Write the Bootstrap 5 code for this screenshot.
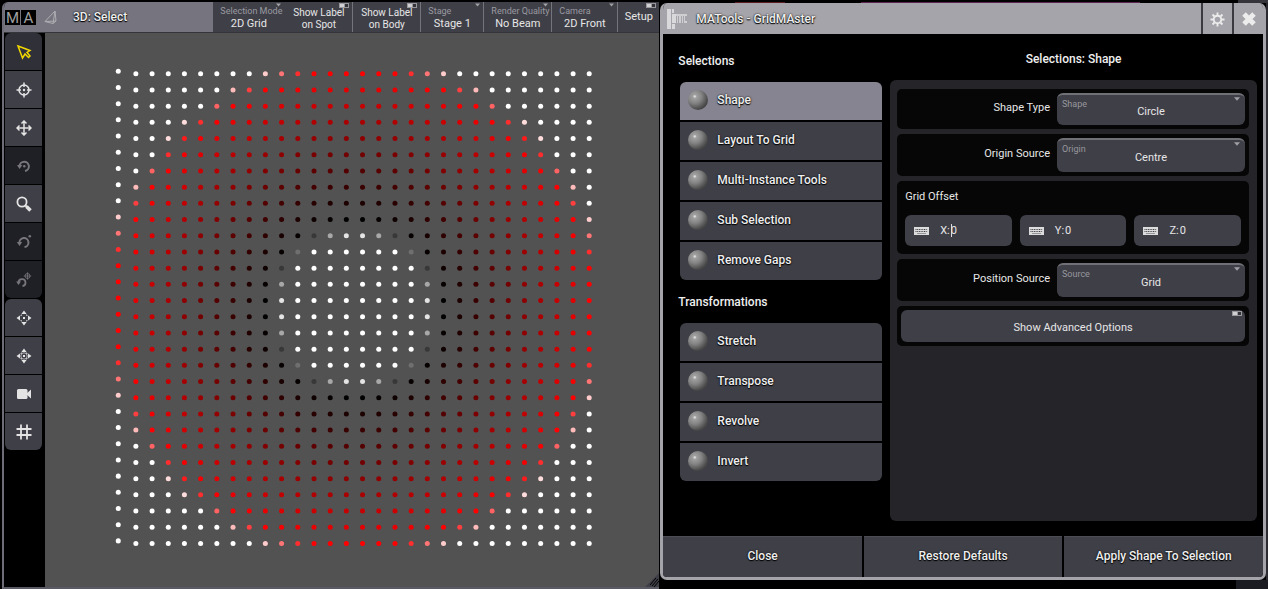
<!DOCTYPE html>
<html lang="en">
<head>
<meta charset="utf-8">
<meta name="viewport" content="width=device-width, initial-scale=1">
<title>MATools - GridMAster</title>
<link href="https://cdn.jsdelivr.net/npm/bootstrap@5.3.0/dist/css/bootstrap.min.css" rel="stylesheet">
<style>
  body { background: #000; color: #e6e6e6; font-family: Roboto, "Liberation Sans", sans-serif; font-size: 12px; line-height: 18px; }
  button, select, input { font: inherit; color: inherit; border: 0; border-radius: 0; padding: 0; }
  .desk { background: linear-gradient(#1b1b22, #1b1b22) right bottom / 32px 9px no-repeat, linear-gradient(#34343a, #34343a) right top / 30px 3px no-repeat, linear-gradient(90deg, #0000 735px, #5a1c20 735px 785px, #0000 785px 861px, #5c2450 861px 1140px, #0000 1140px) 0 2px / 100% 1px no-repeat, linear-gradient(#2a2a30, #2a2a30) right top / 2px 100% no-repeat #000; }
  .outlined { font-weight: 500; color: #efefef; text-shadow: 0 0 2px #000, 0 1px 1px #000; }

  /* 3D window */
  .view-win { flex: 0 0 52%; min-width: 0; margin-top: 2px; padding-left: 2px; }
  .view-frame { border-left: 2px solid #6d6c77; border-bottom: 2px solid #5a5a64; border-top-left-radius: 6px; overflow: hidden; }
  .view-bar { height: 31px; background: #75747f; border-bottom: 1px solid #34343b; }
  .ma-box { width: 15px; height: 15px; margin-left: 1px; background: #000; color: #a0a0a0; font-size: 15px; line-height: 16px; text-align: center; }
  .bar-btn { position: relative; background: #3f3f48; border-right: 1px solid #74747d; font-size: 10px; line-height: 10px; padding-top: 3px; flex: 0 1 68px; min-width: 0; white-space: nowrap; }
  .bar-btn.b-sel { flex-basis: 72px; border-right-color: #3f3f48; }
  .bar-btn.b-stage { flex-basis: 63px; }
  .bar-btn.b-cam { flex-basis: 66px; }
  .bar-btn.b-setup { flex-basis: 41px; border-right: 0; font-size: 11px; padding: 0; }
  .bar-btn small { display: block; font-size: 9px; line-height: 11px; color: #9a9aa0; text-align: left; padding-left: 7px; }
  .bar-btn .val { display: block; font-size: 11px; line-height: 14px; }
  .bar-btn .rows { display: block; line-height: 12px; }
  .corner { position: absolute; top: 1px; right: 3px; width: 10px; height: 5px; }
  .corner.tri { width: 5px; height: 4px; }
  .toolbar { background: #000; width: 41px; padding-left: 1px; gap: 1px; }
  .tool-group { width: 37px; gap: 1px; border-radius: 6px; overflow: hidden; }
  .tool { height: 37px; background: #3f3f48; color: #e4e4e4; display: flex; align-items: center; justify-content: center; }
  .tool.on { background: #303038; color: #f2d600; }
  .tool.off { background: #1f1f26; color: #77777b; }
  .tool svg { width: 16px; height: 16px; }
  .stage { background: #525252; }
  .grip { position: absolute; right: 0; bottom: 0; width: 14px; height: 14px; }

  /* dialog */
  .dlg { margin: 3px 2px 9px 1px; border: 3px solid #a4a4aa; border-top: 0; border-radius: 7px; overflow: hidden; background: #000; }
  .dlg-bar { height: 31px; background: #a4a4aa; }
  .dlg-btn { width: 31px; background: #a4a4aa; border-left: 2px solid #3a3a40; }
  .dlg-body { padding: 0 6px 15px 17px; gap: 8px; }
  .side { flex: 0 0 203px; flex-basis: 35%; padding-top: 18px; }
  .side h2, .main-col h2 { font-size: 12px; line-height: 18px; margin: 0 0 12px -2px; font-weight: 500; color: #efefef; }
  .side nav + h2 { margin-top: 13px; }
  .main-col { padding-top: 16px; }
  .main-col h2 { margin: 0 0 12px; }
  .menu { gap: 2px; border-radius: 6px; overflow: hidden; }
  .menu button { height: 38px; background: #3f3f48; text-align: left; padding: 0 0 2px 8px; gap: 9px; }
  .menu button.active { background: #858490; }
  .ball { width: 20px; height: 20px; border-radius: 50%; background: radial-gradient(circle at 34% 32%, #eee 0, #a0a0a0 10%, #858585 35%, #4c4c4c 68%, #262626 100%); }
  .panel { background: #242429; border-radius: 6px; padding: 9px 8px 8px 7px; gap: 5px; font-size: 11px; line-height: 16px; }
  .opt { background: #060606; border-radius: 5px; padding: 4px; }
  .opt.offsets { padding: 8px; }
  .opt.offsets .title { margin-bottom: 10px; }
  .opt label.name { padding-right: 7px; padding-bottom: 2px; }
  .pick { position: relative; flex: 0 0 188px; }
  .pick select { display: block; width: 100%; height: 34px; border-radius: 6px; background: #3f3f48; border-top: 2px solid #707077; appearance: none; text-align: center; text-align-last: center; padding-top: 4px; }
  .opt:first-child select { height: 32px; }
  .pick .hint { position: absolute; left: 5px; top: 5px; font-size: 9px; line-height: 12px; color: #97979c; }
  .pick svg { position: absolute; right: 5px; top: 4px; width: 6px; height: 4px; }
  .num { flex: 1 1 0; min-width: 0; height: 31px; background: #3f3f48; border-radius: 6px; padding-left: 9px; }
  .num label { padding-left: 11px; }
  .num input { width: 30px; background: none; outline: 0; padding-left: 1px; }
  .num input.caret { background: linear-gradient(#ddd, #ddd) 1px 50% / 1px 13px no-repeat; }
  .adv { position: relative; height: 32px; background: #3f3f48; border-radius: 6px; padding-top: 3px; }
  .foot { gap: 2px; }
  .foot button { flex: 1 1 0; height: 41px; background: #3f3f48; border-top: 1px solid #4c4c55; padding-bottom: 2px; }
</style>
</head>
<body>
<svg class="d-none">
  <symbol id="tri" viewBox="0 0 7 4"><path d="M0 0h7L3.500 4z" fill="#a0a0a5"/></symbol>
  <symbol id="tog" viewBox="0 0 10 5"><rect width="10" height="5" fill="#98989d"/><rect x="1" y="1" width="4" height="3" fill="#d0d0d3"/><rect x="6" y="1" width="3" height="3" fill="#33333a"/></symbol>
  <symbol id="kbd" viewBox="0 0 15 8"><rect width="15" height="8" fill="#dcdcdc"/><path d="M1.500 2.500h12M1.500 4.500h12" stroke="#3f3f48" stroke-dasharray="1 .7"/><path d="M3 6.500h9" stroke="#77777d" stroke-width=".7"/></symbol>
  <symbol id="move4" viewBox="0 0 16 16"><path fill="currentColor" d="M8 .5 10.600 4H5.400zM8 15.500 10.600 12H5.400zM.5 8 4 5.400v5.200zM15.500 8 12 5.400v5.200zM7 7h2v2H7z"/><path d="M5 6V5h1M10 5h1v1M11 10v1h-1M6 11H5v-1" fill="none" stroke="currentColor" stroke-width=".8"/></symbol>
</svg>

<div class="desk d-flex min-vh-100">
  <section class="view-win d-flex">
    <div class="view-frame d-flex flex-column flex-fill position-relative">
      <header class="view-bar d-flex">
        <div class="d-flex align-items-center flex-fill">
          <span class="ma-box">M</span><span class="ma-box">A</span>
          <svg class="ms-2" width="13" height="15" viewBox="0 0 13 15" fill="none" stroke="#aeaeb3"><path d="M11 1 1 11.500 9 13.500zM11 1 12 11 9 13.500M1 11.500 12 11"/></svg>
          <span class="outlined ms-3">3D: Select</span>
        </div>
        <button class="bar-btn b-sel"><small>Selection Mode</small><span class="val">2D Grid</span><svg class="corner tri"><use href="#tri"/></svg></button>
        <button class="bar-btn"><span class="rows">Show Label<br>on Spot</span><svg class="corner"><use href="#tog"/></svg></button>
        <button class="bar-btn"><span class="rows">Show Label<br>on Body</span><svg class="corner"><use href="#tog"/></svg></button>
        <button class="bar-btn b-stage"><small>Stage</small><span class="val">Stage 1</span><svg class="corner tri"><use href="#tri"/></svg></button>
        <button class="bar-btn"><small>Render Quality</small><span class="val">No Beam</span><svg class="corner tri"><use href="#tri"/></svg></button>
        <button class="bar-btn b-cam"><small>Camera</small><span class="val">2D Front</span><svg class="corner tri"><use href="#tri"/></svg></button>
        <button class="bar-btn b-setup">Setup<svg class="corner"><use href="#tog"/></svg></button>
      </header>
      <div class="d-flex flex-fill">
        <div class="toolbar d-flex flex-column">
          <div class="tool-group d-flex flex-column">
            <button class="tool on" aria-label="Select"><svg viewBox="0 0 16 16" fill="none" stroke="currentColor" stroke-width="1.500"><path d="M2 2 14 6.500 11 8.500 14 12 12.500 13.500 9 10 6.500 14z"/></svg></button>
            <button class="tool" aria-label="Target"><svg viewBox="0 0 16 16" fill="none" stroke="currentColor" stroke-width="1.500"><circle cx="8" cy="8" r="5"/><path d="M8 .5V5M8 11v4.500M.5 8H5M11 8h4.500"/><circle cx="8" cy="8" r="1.200" fill="currentColor" stroke="none"/></svg></button>
            <button class="tool" aria-label="Move"><svg viewBox="0 0 16 16" fill="none" stroke="currentColor" stroke-width="1.500"><path d="M8 1v14M1 8h14M5.500 3.500 8 1l2.500 2.500M5.500 12.500 8 15l2.500-2.500M3.500 5.500 1 8l2.500 2.500M12.500 5.500 15 8l-2.500 2.500"/></svg></button>
            <button class="tool off" aria-label="Rotate"><svg viewBox="0 0 16 16" fill="none" stroke="currentColor" stroke-width="2"><path d="M3.500 8A4.700 4.700 0 1 1 9 13"/><path d="M1 7h5.400L3.500 11z" fill="currentColor" stroke="none"/><circle cx="8.300" cy="8.300" r="1.200" fill="currentColor" stroke="none"/></svg></button>
            <button class="tool" aria-label="Zoom"><svg viewBox="0 0 16 16" fill="none" stroke="currentColor"><circle cx="6" cy="6" r="4.600" stroke-width="1.800"/><path d="m9 9 2 2" stroke-width="2"/><path d="m10.500 10.500 4 4" stroke-width="3.600"/></svg></button>
            <button class="tool off" aria-label="Orbit"><svg viewBox="0 0 16 16" fill="none" stroke="currentColor" stroke-width="2"><path d="M3.500 9A4.500 4.500 0 1 1 8.500 13"/><path d="M.8 8h5.400L3.500 12z" fill="currentColor" stroke="none"/><circle cx="13.800" cy="2.300" r="1.300" fill="currentColor" stroke="none"/></svg></button>
            <button class="tool off" aria-label="Orbit target"><svg viewBox="0 0 16 16" fill="none" stroke="currentColor"><path d="M2.500 10.500A3.500 3.500 0 1 1 6.500 14" stroke-width="1.800"/><path d="M.2 9.500h4.800L2.500 13z" fill="currentColor" stroke="none"/><circle cx="11.500" cy="4" r="2.500" stroke-width=".8"/><path d="M11.500.3v7.400M7.800 4h7.400" stroke-width=".8"/></svg></button>
          </div>
          <div class="tool-group d-flex flex-column">
            <button class="tool" aria-label="Pan"><svg><use href="#move4"/></svg></button>
            <button class="tool" aria-label="Pan target"><svg><use href="#move4"/><circle cx="8" cy="8" r="3.200" fill="none" stroke="currentColor" stroke-width=".7"/></svg></button>
            <button class="tool" aria-label="Camera"><svg viewBox="0 0 16 16" fill="currentColor"><rect x="1" y="3" width="10.500" height="10" rx="1.500"/><path d="m10 8 5-4.500v9z"/></svg></button>
            <button class="tool" aria-label="Grid"><svg viewBox="0 0 16 16" fill="none" stroke="currentColor" stroke-width="1.800"><path d="M5 .5v15M11 .5v15M.5 5h15M.5 11h15"/></svg></button>
          </div>
        </div>
        <div class="stage flex-fill d-flex"><svg id="dots" class="w-100" viewBox="0 0 614 552" role="img" aria-label="Fixture grid"></svg></div>
      </div>
      <svg class="grip" viewBox="0 0 14 14"><path d="M0 14 14 0v14z" fill="#3f3f48"/><path d="m5 12 6-7M7 13l6-7M9 14l5-6" stroke="#000"/></svg>
    </div>
  </section>

  <section class="dlg d-flex flex-column flex-fill">
    <header class="dlg-bar d-flex align-items-stretch">
      <div class="d-flex align-items-center flex-fill ps-1">
        <svg width="21" height="20" viewBox="0 0 21 20" fill="#d9d9db"><path d="M0 0h4v20H0zM5 0h2v4H5zM5 15h3v5H5zM5 5h4v9H5z"/><path d="M9 5h11v2H9zM10 7h1v7h-1zM12 7h2v7h-2zM15 7h1v7h-1zM17 7h1v7h-1zM18 12h2v2h-2z" opacity=".8"/></svg>
        <span class="outlined ms-2">MATools - GridMAster</span>
      </div>
      <button class="dlg-btn" aria-label="Settings"><svg width="15" height="15" viewBox="0 0 16 16" fill="none" stroke="#ececec"><circle cx="8" cy="8" r="4" stroke-width="2"/><path d="M8 .5v3M8 12.500v3M.5 8h3M12.500 8h3M2.700 2.700l2.100 2.100M11.200 11.200l2.100 2.100M2.700 13.300l2.100-2.100M11.200 4.800l2.100-2.100" stroke-width="2"/></svg></button>
      <button class="dlg-btn" aria-label="Close window"><svg width="16" height="16" viewBox="0 0 16 16"><path d="m3 3 10 10M13 3 3 13" stroke="#ececec" stroke-width="5"/></svg></button>
    </header>
    <div class="dlg-body d-flex flex-fill">
      <div class="side">
        <h2>Selections</h2>
        <nav class="menu d-flex flex-column" aria-label="Selections">
          <button class="active outlined d-flex align-items-center"><span class="ball"></span>Shape</button>
          <button class="outlined d-flex align-items-center"><span class="ball"></span>Layout To Grid</button>
          <button class="outlined d-flex align-items-center"><span class="ball"></span>Multi-Instance Tools</button>
          <button class="outlined d-flex align-items-center"><span class="ball"></span>Sub Selection</button>
          <button class="outlined d-flex align-items-center"><span class="ball"></span>Remove Gaps</button>
        </nav>
        <h2>Transformations</h2>
        <nav class="menu d-flex flex-column" aria-label="Transformations">
          <button class="outlined d-flex align-items-center"><span class="ball"></span>Stretch</button>
          <button class="outlined d-flex align-items-center"><span class="ball"></span>Transpose</button>
          <button class="outlined d-flex align-items-center"><span class="ball"></span>Revolve</button>
          <button class="outlined d-flex align-items-center"><span class="ball"></span>Invert</button>
        </nav>
      </div>
      <div class="main-col d-flex flex-column flex-fill">
        <h2 class="text-center">Selections: Shape</h2>
        <div class="panel d-flex flex-column flex-fill">
          <div class="opt d-flex align-items-center">
            <label class="name flex-fill text-end" for="shape">Shape Type</label>
            <div class="pick"><select id="shape"><option>Circle</option></select><span class="hint">Shape</span><svg><use href="#tri"/></svg></div>
          </div>
          <div class="opt d-flex align-items-center">
            <label class="name flex-fill text-end" for="origin">Origin Source</label>
            <div class="pick"><select id="origin"><option>Centre</option></select><span class="hint">Origin</span><svg><use href="#tri"/></svg></div>
          </div>
          <div class="opt offsets">
            <div class="title">Grid Offset</div>
            <div class="d-flex gap-2">
              <div class="num d-flex align-items-center"><svg width="15" height="8"><use href="#kbd"/></svg><label for="ox">X:</label><input id="ox" class="caret" value="0"></div>
              <div class="num d-flex align-items-center"><svg width="15" height="8"><use href="#kbd"/></svg><label for="oy">Y:</label><input id="oy" value="0"></div>
              <div class="num d-flex align-items-center"><svg width="15" height="8"><use href="#kbd"/></svg><label for="oz">Z:</label><input id="oz" value="0"></div>
            </div>
          </div>
          <div class="opt d-flex align-items-center">
            <label class="name flex-fill text-end" for="source">Position Source</label>
            <div class="pick"><select id="source"><option>Grid</option></select><span class="hint">Source</span><svg><use href="#tri"/></svg></div>
          </div>
          <div class="opt"><button class="adv w-100 d-block">Show Advanced Options<svg class="corner"><use href="#tog"/></svg></button></div>
        </div>
      </div>
    </div>
    <footer class="foot d-flex">
      <button class="outlined">Close</button>
      <button class="outlined">Restore Defaults</button>
      <button class="outlined">Apply Shape To Selection</button>
    </footer>
  </section>
</div>
<script src="https://cdn.jsdelivr.net/npm/bootstrap@5.3.0/dist/js/bootstrap.bundle.min.js"></script>
<script>
  // 30 x 30 fixtures, coloured by distance from the grid centre:
  // white core, black-to-red ramp, white outside the circle.
  const N = 30, mid = (N - 1) / 2, pitch = 16.18;
  const clamp = v => Math.max(0, Math.min(1, v));
  let out = '';
  for (let c = 0; c < N; c++) {
    for (let r = 0; r < N; r++) {
      const d = Math.hypot(c - mid, r - mid);
      const core = clamp((5.35 - d) / 0.92);
      const rim = clamp((d - 14.75) / 0.95);
      const w = Math.round(255 * Math.max(core, rim));
      const red = Math.max(w, Math.round(255 * clamp((d - 5.5) / 9)));
      const x = c ? 90.8 + (c - 1) * pitch : 73.2;
      const y = (c ? 40 : 37.5) + r * pitch;
      out += `<circle cx="${x.toFixed(1)}" cy="${y.toFixed(1)}" r="2.5" fill="rgb(${red},${w},${w})"/>`;
    }
  }
  document.getElementById('dots').innerHTML = out;
</script>
</body>
</html>
